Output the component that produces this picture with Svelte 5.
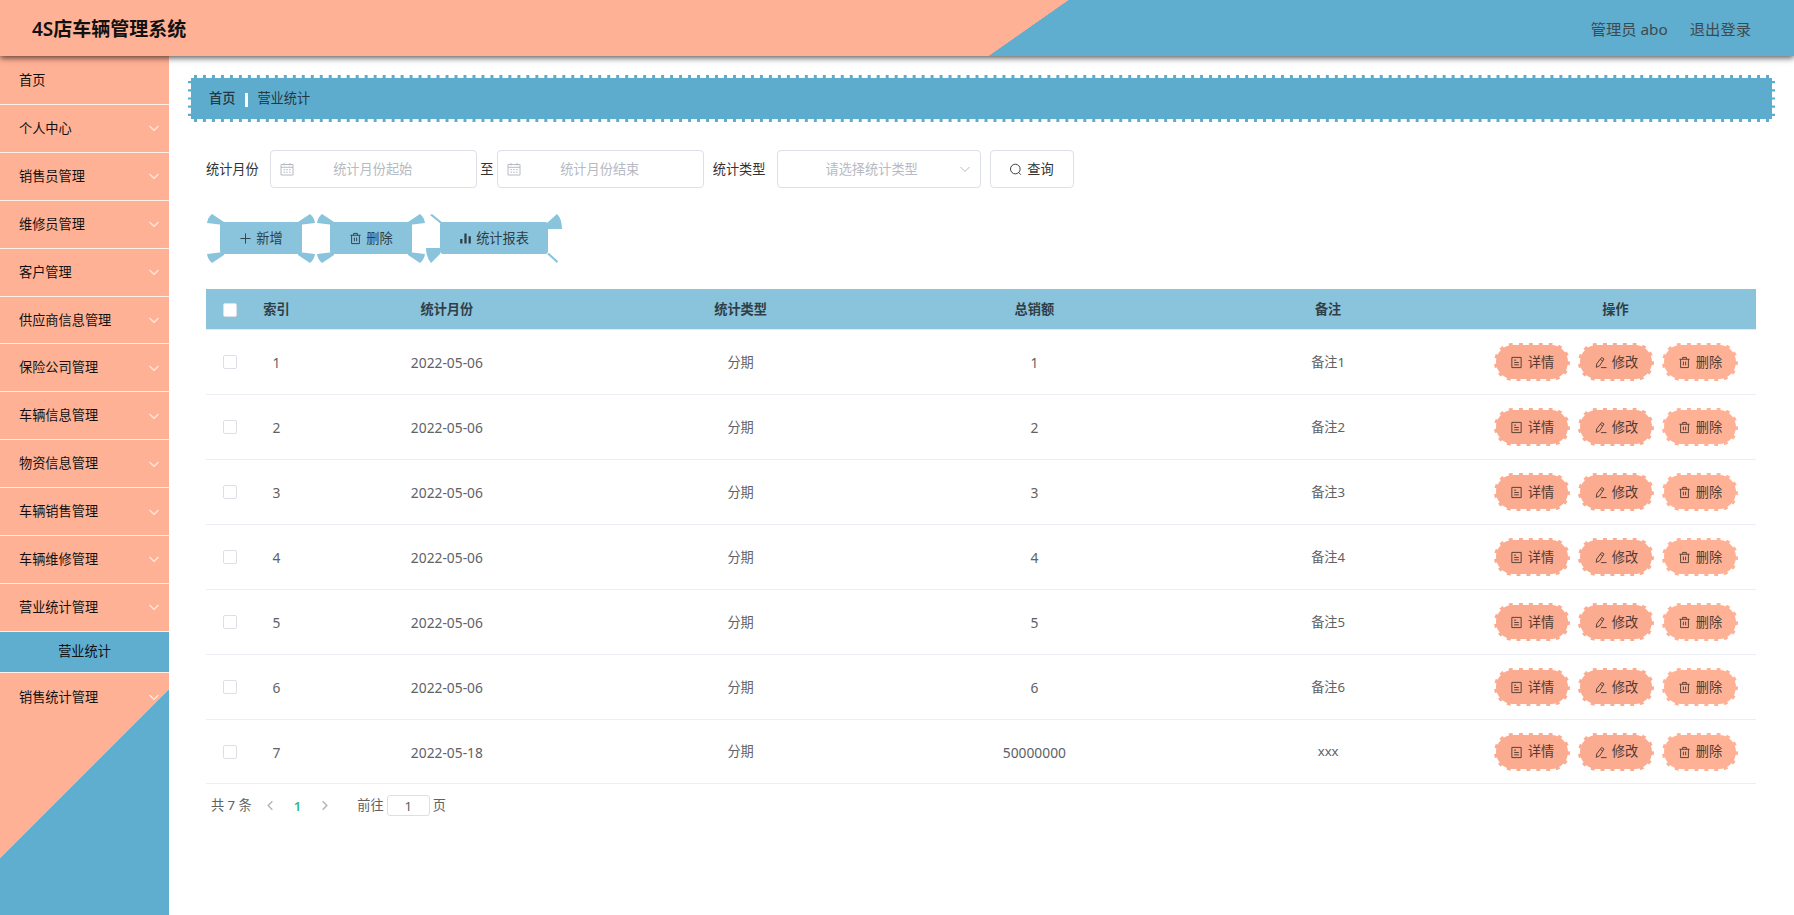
<script lang="ts">
  const menu = [
    '首页',
    '个人中心',
    '销售员管理',
    '维修员管理',
    '客户管理',
    '供应商信息管理',
    '保险公司管理',
    '车辆信息管理',
    '物资信息管理',
    '车辆销售管理',
    '车辆维修管理',
    '营业统计管理',
    '销售统计管理'
  ];
  const openMenu = '营业统计管理';

  let rows = $state([
    { id: 1, month: '2022-05-06', type: '分期', total: '1', remark: '备注1', checked: false },
    { id: 2, month: '2022-05-06', type: '分期', total: '2', remark: '备注2', checked: false },
    { id: 3, month: '2022-05-06', type: '分期', total: '3', remark: '备注3', checked: false },
    { id: 4, month: '2022-05-06', type: '分期', total: '4', remark: '备注4', checked: false },
    { id: 5, month: '2022-05-06', type: '分期', total: '5', remark: '备注5', checked: false },
    { id: 6, month: '2022-05-06', type: '分期', total: '6', remark: '备注6', checked: false },
    { id: 7, month: '2022-05-18', type: '分期', total: '50000000', remark: 'xxx', checked: false }
  ]);

  let start = $state('');
  let end = $state('');
  let page = $state('1');

  function toggleAll(e: Event) {
    const on = (e.target as HTMLInputElement).checked;
    rows.forEach((r) => (r.checked = on));
  }
</script>

{#snippet icon(name: string)}
  <svg class="icon" viewBox="0 0 14 14" fill="none" stroke="currentColor" stroke-width="1">
    {#if name === 'plus'}
      <path d="M7 1.5v11M1.5 7h11" />
    {:else if name === 'trash'}
      <path d="M1.5 3.5h11M5 3.5v-2h4v2M2.8 3.5v9h8.4v-9M5.8 6v4M8.2 6v4" />
    {:else if name === 'chart'}
      <path d="M2.5 7.5v5M7 1.5v11M11.5 4.5v8" stroke-width="2.4" />
    {:else if name === 'detail'}
      <path d="M2 1.5h10v11h-10zM4.5 4.5h2M4.5 7h5M4.5 9.5h5" />
    {:else if name === 'edit'}
      <path d="M8.2 1.6l2.6 1.6-4.8 7.4-3.6 1.6.6-3.8zM6.8 3.7l2.6 1.7M7.5 12.5h6" />
    {:else if name === 'search'}
      <circle cx="6.8" cy="6.5" r="5.2" />
      <path d="M10.4 10.2l2.3 2.4" />
    {:else if name === 'calendar'}
      <path d="M1 2.5h12v10.5h-12zM1 5.3h12M4 1v2.5M10 1v2.5M3.5 7.7h1.6M6.2 7.7h1.6M9 7.7h1.6M3.5 10.2h1.6M6.2 10.2h1.6M9 10.2h1.6" />
    {:else if name === 'down'}
      <path d="M2.5 5l4.5 4.5 4.5-4.5" />
    {:else if name === 'left'}
      <path d="M9 2.5l-4.5 4.5 4.5 4.5" stroke-width="1.5" />
    {:else if name === 'right'}
      <path d="M5 2.5l4.5 4.5-4.5 4.5" stroke-width="1.5" />
    {/if}
  </svg>
{/snippet}

<div class="layout">
  <header class="header">
    <h1>4S店车辆管理系统</h1>
    <div class="user">
      <span>管理员 abo</span>
      <span>退出登录</span>
    </div>
  </header>

  <div class="body">
    <nav class="sidebar">
      {#each menu as item, i}
        <div class="menu-item">
          <span>{item}</span>
          {#if i > 0}{@render icon('down')}{/if}
        </div>
        {#if item === openMenu}
          <div class="submenu-item">营业统计</div>
        {/if}
      {/each}
    </nav>

    <main class="main">
      <div class="breadcrumb">
        <span class="home">首页</span>
        <i class="separator"></i>
        <span>营业统计</span>
      </div>

      <div class="filters">
        <label for="start">统计月份</label>
        <div class="field date">
          {@render icon('calendar')}
          <input id="start" placeholder="统计月份起始" bind:value={start} />
        </div>
        <span class="to">至</span>
        <div class="field date">
          {@render icon('calendar')}
          <input placeholder="统计月份结束" bind:value={end} />
        </div>
        <span class="type-label">统计类型</span>
        <div class="field select">
          <span>请选择统计类型</span>
          {@render icon('down')}
        </div>
        <button class="search">{@render icon('search')}查询</button>
      </div>

      <div class="tools">
        {#each [['plus', '新增'], ['trash', '删除']] as [name, text]}
          <button class="tool">
            <svg class="wings" viewBox="0 0 108 49">
              <path d="M0 9Q1 3 5 0L17 8V11ZM108 9Q107 3 103 0L91 8V11ZM0 40Q1 46 5 49L17 41V38ZM108 40Q107 46 103 49L91 41V38Z" />
            </svg>
            {@render icon(name)}{text}
          </button>
        {/each}
        <button class="tool report">
          <svg class="wings" viewBox="0 0 136 49">
            <path d="M4 1L6 0L17 9L15 10ZM136 15Q136 5 131 0L121 9V15ZM0 34H14V40L5 49Q0 43 0 34ZM121 40L123 39L132 47L131 49Z" />
          </svg>
          {@render icon('chart')}统计报表
        </button>
      </div>

      <table>
        <thead>
          <tr>
            <th class="col-check"><input type="checkbox" onchange={toggleAll} /></th>
            <th class="col-index">索引</th>
            <th>统计月份</th>
            <th>统计类型</th>
            <th>总销额</th>
            <th>备注</th>
            <th class="col-actions">操作</th>
          </tr>
        </thead>
        <tbody>
          {#each rows as row (row.id)}
            <tr>
              <td><input type="checkbox" bind:checked={row.checked} /></td>
              <td class="number">{row.id}</td>
              <td class="number">{row.month}</td>
              <td>{row.type}</td>
              <td class="number">{row.total}</td>
              <td>{row.remark}</td>
              <td>
                <div class="actions">
                  <button class="dark">{@render icon('detail')}详情</button>
                  <button class="dark">{@render icon('edit')}修改</button>
                  <button>{@render icon('trash')}删除</button>
                </div>
              </td>
            </tr>
          {/each}
        </tbody>
      </table>

      <div class="pagination">
        <span class="total">共 7 条</span>
        {@render icon('left')}
        <span class="current">1</span>
        {@render icon('right')}
        <span class="jump">前往</span>
        <input bind:value={page} />
        <span>页</span>
      </div>
    </main>
  </div>
</div>

<style>
  :global(body) {
    margin: 0;
    overflow: hidden;
    background: #fff;
    font-family: "Noto Sans", "Noto Sans CJK SC", sans-serif;
    font-size: 13.2px;
  }

  .layout {
    height: 915px;
    display: flex;
    flex-direction: column;
  }

  .layout :is(button, input) {
    box-sizing: border-box;
    font: inherit;
  }

  .icon {
    width: 14px;
    height: 14px;
    flex: none;
  }

  /* Header */
  .header {
    position: relative;
    z-index: 2;
    box-sizing: border-box;
    height: 56px;
    flex: none;
    display: flex;
    align-items: center;
    justify-content: space-between;
    padding: 0 43px 1px 32px;
    background: linear-gradient(145deg, #ffb195 0, #ffb195 57%, #5fadcf 57.05%);
    clip-path: inset(0 0 -12px 0);
    box-shadow: 0 2px 6px rgba(0, 0, 0, 0.65);
  }

  .header h1 {
    margin: 0;
    font-size: 19px;
    font-weight: 600;
    color: #111;
  }

  .user {
    display: flex;
    gap: 22px;
    font-size: 15.3px;
    color: #3d4a50;
  }

  .body {
    flex: 1;
    display: flex;
    min-height: 0;
  }

  /* Sidebar */
  .sidebar {
    width: 169px;
    flex: none;
    background: linear-gradient(135deg, #ffb195 0, #ffb195 78.1%, #5fadcf 78.1%);
  }

  .menu-item {
    box-sizing: border-box;
    height: 47.9px;
    display: flex;
    align-items: center;
    justify-content: space-between;
    padding: 0 8px 2px 19px;
    border-bottom: 1px solid #fff0ea;
    color: #111;
  }

  .menu-item:first-child {
    height: 49px;
  }

  .menu-item:last-child {
    border-bottom: none;
  }

  .menu-item .icon {
    margin-top: 2px;
    color: #ffeae2;
    stroke-width: 1.2;
  }

  .submenu-item {
    box-sizing: border-box;
    height: 41.5px;
    line-height: 38px;
    text-align: center;
    background: #5fadcf;
    border-bottom: 1px solid #fff0ea;
    color: #111;
  }

  /* Content */
  .main {
    flex: 1;
    min-width: 0;
    padding: 19px 19px 0;
  }

  .breadcrumb {
    box-sizing: border-box;
    height: 47px;
    display: flex;
    align-items: center;
    padding: 0 18px 2px;
    border: 3px dashed #fff;
    background: #5dacce;
    color: #26373f;
  }

  .breadcrumb .home {
    font-weight: 500;
  }

  .separator {
    width: 3px;
    height: 14px;
    margin: 4px 9px 0 10px;
    background: #fff;
  }

  .filters {
    display: flex;
    align-items: center;
    margin: 28px 0 0 18px;
    color: #333;
  }

  .filters > label,
  .filters > span {
    padding-bottom: 2px;
  }

  .field {
    box-sizing: border-box;
    height: 38px;
    display: flex;
    align-items: center;
    border: 1px solid #dcdfe6;
    border-radius: 4px;
    color: #b6bac3;
  }

  .date {
    width: 207px;
    padding-left: 9px;
  }

  label + .date {
    margin-left: 11px;
  }

  .date input {
    width: 158px;
    padding: 0 0 1px;
    border: none;
    outline: none;
    background: none;
    text-align: center;
  }

  .date input::placeholder {
    color: #b6bac3;
  }

  .to {
    width: 20px;
    text-align: center;
  }

  .type-label {
    margin: 0 11px 0 9px;
  }

  .select {
    width: 204px;
    padding: 0 8px 1px 48px;
    justify-content: space-between;
  }

  .search {
    width: 84px;
    height: 38px;
    margin-left: 9px;
    padding: 0 0 2px;
    display: flex;
    align-items: center;
    justify-content: center;
    gap: 5px;
    border: 1px solid #dcdfe6;
    border-radius: 4px;
    background: #fff;
    color: #333;
  }

  .tools {
    display: flex;
    gap: 28px;
    margin: 34px 0 0 32px;
  }

  .tool {
    position: relative;
    width: 82px;
    height: 32px;
    padding: 0 0 2px;
    display: flex;
    align-items: center;
    justify-content: center;
    gap: 4px;
    border: none;
    border-radius: 3px;
    background: #8ac3dc;
    color: #2c3e46;
  }

  button .icon {
    width: 13px;
    height: 13px;
    margin-top: 3px;
  }

  .report {
    width: 108px;
  }

  .wings {
    position: absolute;
    left: -14px;
    top: -8px;
    width: 110px;
    height: 49px;
    fill: #8ac3dc;
  }

  .report .wings {
    width: 136px;
  }

  /* Table */
  table {
    width: 1550px;
    margin: 35px 0 0 18px;
    table-layout: fixed;
    border-collapse: separate;
    border-spacing: 0;
    color: #606266;
    text-align: center;
  }

  th {
    height: 39px;
    padding: 0 0 1px;
    background: #8ac3dc;
    border-bottom: 1px solid #d8edf6;
    color: #2f3f47;
    font-weight: 600;
  }

  td {
    height: 62px;
    padding: 0 0 2px;
    border-bottom: 1px solid #ebeef5;
  }

  tbody tr:last-child td {
    height: 61px;
  }

  td.number,
  tbody tr:last-child td.number {
    height: 62px;
    padding: 1px 0 0;
    font-size: 13.8px;
  }

  .col-check {
    width: 47px;
  }

  .col-index {
    width: 47px;
  }

  .col-actions {
    width: 281px;
  }

  table input {
    appearance: none;
    display: block;
    width: 14px;
    height: 14px;
    margin: 2px auto 0;
    border: 1px solid #dcdfe6;
    border-radius: 2px;
    background: #fff;
  }

  .actions {
    display: flex;
    justify-content: center;
    gap: 8px;
    padding: 2px 0 0 1px;
  }

  .actions button {
    width: 76px;
    height: 38px;
    padding: 0 0 2px;
    display: flex;
    align-items: center;
    justify-content: center;
    gap: 5px;
    border: 2px dashed #fff;
    border-radius: 20px;
    background: #ffb195;
    color: #523a32;
  }

  .actions .dark {
    background: #faab90;
  }

  .pagination {
    display: flex;
    align-items: center;
    margin: 11px 0 0 23px;
    color: #606266;
  }

  .pagination span {
    padding-bottom: 2px;
  }

  .total {
    margin-right: 12px;
  }

  .pagination .icon {
    width: 13px;
    height: 13px;
    color: #b0b4bb;
  }

  .pagination .current {
    margin: 0 17px;
    padding-bottom: 0;
    color: #2fb98c;
    font-weight: 600;
  }

  .jump {
    margin-left: 26px;
  }

  .pagination input {
    width: 43px;
    height: 21px;
    margin: 0 3px;
    padding: 0;
    border: 1px solid #dcdfe6;
    border-radius: 3px;
    color: #606266;
    text-align: center;
  }
</style>
